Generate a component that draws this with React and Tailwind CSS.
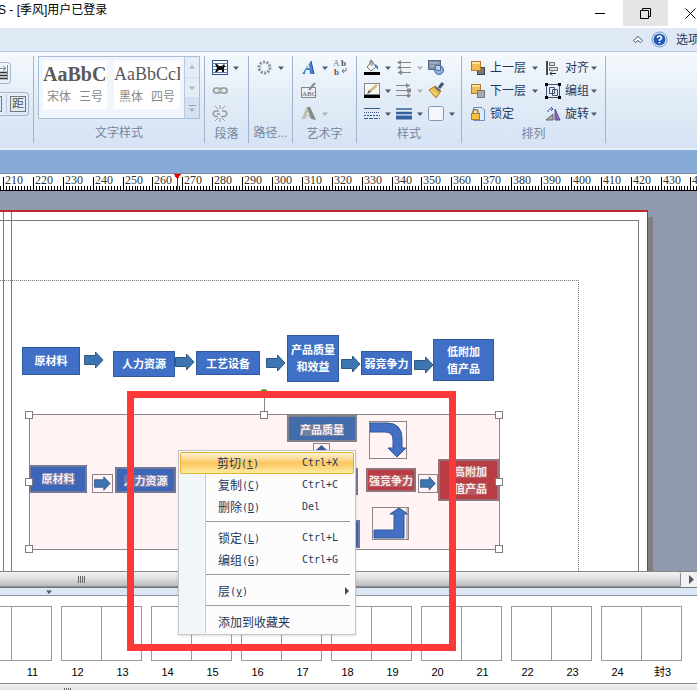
import React from "react";

const cjk = "font-['Liberation_Sans','Noto_Sans_CJK_SC',sans-serif]";

function Caret({ dim }) {
  return (
    <svg width="6" height="4" viewBox="0 0 6 4" className="shrink-0" aria-hidden="true">
      <path d="M0 0.5H6L3 4Z" fill={dim ? "#a9b3c2" : "#4c5a70"} />
    </svg>
  );
}

function Tool({ label, caret, dim, children }) {
  return (
    <button type="button" aria-label={label} className="flex h-[23px] w-8 items-center gap-1">
      <svg width="17" height="17" viewBox="0 0 17 17" className="shrink-0" aria-hidden="true">
        {children}
      </svg>
      {caret && <Caret dim={dim} />}
    </button>
  );
}

function TextTool({ label, caret, gap, children }) {
  return (
    <button type="button" className="flex h-[23px] items-center whitespace-nowrap text-xs text-[#1e395b]">
      <svg width="16" height="16" viewBox="0 0 16 16" className="shrink-0" aria-hidden="true">
        {children}
      </svg>
      <span className={`ml-1 ${gap}`}>{label}</span>
      {caret && <Caret />}
    </button>
  );
}

function Group({ title, width, children }) {
  return (
    <section className={`flex h-[87px] shrink-0 flex-col border-r border-[#9fb3cf] ${width}`}>
      <div className="h-[69px]">{children}</div>
      {title && <h2 className="text-center text-xs leading-[19px] whitespace-nowrap text-[#75869f]">{title}</h2>}
    </section>
  );
}

function Ribbon() {
  return (
    <div className="flex h-[99px] shrink-0 overflow-hidden border-t border-b-2 border-t-[#b4c8e0] border-b-[#e6eef8] bg-linear-to-b from-[#f5f9fd] via-[#e2ecf7] to-[#d6e3f3] pt-1">
      <Group title="" width="w-[34px]">
        <div className="flex flex-col gap-2 pt-1.5">
          <button type="button" aria-label="文字方向" className="flex h-[22px] w-[11px] items-center rounded-r border border-l-0 border-[#a8b6c9]">
            <svg width="9" height="18" viewBox="0 0 9 18" aria-hidden="true">
              <path d="M0 8.5H7M0 11.500H7M0 14.5H7" stroke="#333" strokeWidth="1.5" />
              <path d="M7.5 1V16M0 4.5H6M3 2L6 4.500L3 7" stroke="#888" fill="none" />
            </svg>
          </button>
          <button type="button" aria-label="间距" className="flex h-6 w-[29px] items-center rounded-r border border-l-0 border-[#a8b6c9]">
            <span className="h-4 w-[2px] border-y border-r border-[#777]" />
            <span className="ml-1 h-5 border-l border-[#c0cbda]" />
            <span className="ml-[3px] flex h-4 w-4 items-center justify-center border border-[#777] text-xs leading-3 text-[#555]">距</span>
          </button>
        </div>
      </Group>
      <Group title="文字样式" width="w-[171px]">
        <div className="ml-1 flex h-[63px] w-[162px] border border-[#a8bdd8] bg-[#f1f6fc]">
          <button type="button" className="mt-1 ml-1 h-12 w-16 overflow-hidden bg-white text-[#5a5a5a]">
            <span className="block text-left font-['Liberation_Serif',serif] text-xl leading-6 font-bold">AaBbCc</span>
            <span className="flex justify-center gap-2 text-xs leading-[22px] text-[#888]"><span>宋体</span><span>三号</span></span>
          </button>
          <button type="button" className="mt-1 ml-[7px] h-12 w-[66px] overflow-hidden bg-white text-[#5a5a5a]">
            <span className="block text-left font-['Liberation_Serif',serif] text-lg leading-6">AaBbCcD</span>
            <span className="flex justify-center gap-2 text-xs leading-[22px] text-[#888]"><span>黑体</span><span>四号</span></span>
          </button>
          <div className="ml-auto flex w-[15px] flex-col divide-y divide-[#d3deed] border-l border-[#b9cae0] bg-[#e3ecf7]">
            <button type="button" aria-label="上" className="flex flex-1 items-center justify-center"><span className="rotate-180"><Caret dim /></span></button>
            <button type="button" aria-label="下" className="flex flex-1 items-center justify-center"><Caret dim /></button>
            <button type="button" aria-label="更多" className="flex flex-1 flex-col items-center justify-center gap-0.5 bg-[#d5e1f0]"><span className="w-[7px] border-t border-[#8f9bb0]" /><Caret dim /></button>
          </div>
        </div>
      </Group>
      <Group title="段落" width="w-11">
        <div className="pl-[7px]">
          <Tool label="环绕" caret>
            <rect x="0.5" y="1.5" width="15" height="14" fill="#fff" stroke="#2c4f85" />
            <path d="M0 4.5H16M0 7.500H16M0 10.5H16M0 13.5H16" stroke="#5b7dad" />
            <path d="M3 5L5 5L7 7H10L12 5L13 7L12 9V13H10V11H7L5 13H3L5 9Z" fill="#111" />
          </Tool>
          <Tool label="链接">
            <g fill="none" stroke="#939794" strokeWidth="1.7"><rect x="1.5" y="6" width="7" height="5" rx="2.5" /><rect x="8" y="6" width="7" height="5" rx="2.5" /></g>
            <path d="M5 8.5H11" stroke="#c9c9be" strokeWidth="1.5" />
          </Tool>
          <Tool label="断开链接">
            <g fill="none" stroke="#989a98" strokeWidth="1.5"><path d="M7 6H4A2.5 2.5 0 0 0 4 11.5H6M10 6H12A2.5 2.5 0 0 1 12 11.5H9M5 9H8" /><path d="M3 1L6 4M8 0V4M13 1L10 4M3 16L6 13M8 17V13M13 16L10 13" strokeWidth="1" /></g>
          </Tool>
        </div>
      </Group>
      <Group title="路径..." width="w-11">
        <div className="pl-2">
          <Tool label="路径" caret>
            <circle cx="7.5" cy="8.5" r="5.5" fill="none" stroke="#8b939c" strokeWidth="3" strokeDasharray="2 1.4" />
          </Tool>
        </div>
      </Group>
      <Group title="艺术字" width="w-16">
        <div className="grid grid-cols-[32px_24px] pl-2">
          <Tool label="艺术字样式" caret>
            <path d="M1 15L10 2L13 15H9L8.500 11H5L4 15Z" fill="#4a82d4" /><path d="M6 9H8.500L8 5.500Z" fill="#eef5ff" /><path d="M10 2L13 15" stroke="#244d93" />
          </Tool>
          <Tool label="替换文字">
            <text x="0" y="7" fontSize="9" fontFamily="Liberation Serif" fill="#777">A</text>
            <text x="8" y="7" fontSize="9" fontWeight="bold" fontFamily="Liberation Serif" fill="#555">b</text>
            <text x="1" y="16" fontSize="9" fontWeight="bold" fontFamily="Liberation Serif" fill="#555">b</text>
            <path d="M13 9V12H9M11 10L9 12L11 14" fill="none" stroke="#777" />
          </Tool>
          <Tool label="编辑文字">
            <rect x="0.500" y="5.500" width="14" height="10" fill="#edf0f2" stroke="#888" />
            <text x="1" y="14" fontSize="7" fontFamily="Liberation Serif" fill="#555">ABC</text>
            <path d="M14 1L8 8" stroke="#888" strokeWidth="2" />
          </Tool>
          <span />
          <Tool label="文字效果" caret dim>
            <path d="M1 14L6 2H9L15 15L10 14L9 11H5L4 14Z" fill="#858a84" /><path d="M1 14L6 2L10 13H8L7 11H5L4 14Z" fill="#bfc1b5" />
            <path d="M5.500 10H8L7 7Z" fill="#edf1f4" />
          </Tool>
        </div>
      </Group>
      <Group title="样式" width="w-[105px]">
        <div className="grid grid-cols-[32px_32px_32px] pl-[7px]">
          <Tool label="填充颜色" caret>
            <path d="M3 8L8 2L12 8L7 12Z" fill="#f5f5f5" stroke="#777" /><path d="M6 6V2Q7 0 8 2V7" fill="none" stroke="#777" /><path d="M10 5Q15 6 14 11L12 8Z" fill="#3e70bd" /><rect y="13" width="16" height="3" fill="#000" />
          </Tool>
          <Tool label="左箭头样式" caret dim>
            <path d="M2 3.500H15M2 8.500H15M2 13.500H15" stroke="#888" /><path d="M5 1L1 3.500L5 6ZM5 6L1 8.500L5 11ZM5 11L2 13.500L5 16L7 13.500Z" fill="#888" />
          </Tool>
          <Tool label="阴影">
            <circle cx="11" cy="11" r="4.500" fill="#94b3dc" stroke="#46699e" /><rect x="0.500" y="1.500" width="12" height="9" fill="#7d8ea8" stroke="#59687f" /><path d="M2 4H11M2 7H8" stroke="#b8c4d5" /><path d="M7 6.500H12.500V11.500H9Q7 10 7 6.500Z" fill="#bcd3ee" stroke="#46699e" />
          </Tool>
          <Tool label="线条颜色" caret>
            <rect x="0.500" y="1.500" width="15" height="11" fill="#f8f8f4" stroke="#888" /><path d="M13 3L6 9" stroke="#d6b878" strokeWidth="2.500" /><path d="M5 8L3 12L7 10Z" fill="#555" /><rect y="13" width="16" height="3" fill="#000" />
          </Tool>
          <Tool label="右箭头样式" caret dim>
            <path d="M0 3.500H14M0 8.500H14M0 13.500H14" stroke="#888" /><path d="M10 1L14 3.500L10 6ZM11 6.500H15V10.500H11ZM10 13.500L12.500 11L15 13.500L12.500 16Z" fill="#888" />
          </Tool>
          <Tool label="格式刷">
            <path d="M15 1L11 6" stroke="#445375" strokeWidth="3" /><path d="M7 4L13 9L8 16L1 8Z" fill="#e9bd4e" stroke="#aa7b26" /><path d="M7 5L12 9" stroke="#5b6a8c" strokeWidth="2" /><path d="M3 9L9 13" stroke="#fff0aa" />
          </Tool>
          <Tool label="虚线" caret>
            <path d="M0 3.500H16" stroke="#36588e" /><path d="M0 7.500H16" stroke="#36588e" strokeDasharray="1 1" /><path d="M0 10.500H16" stroke="#36588e" strokeDasharray="2 1" /><path d="M0 13.500H16" stroke="#36588e" strokeDasharray="4 1" />
          </Tool>
          <Tool label="线宽" caret>
            <path d="M0 4H16" stroke="#36609e" strokeWidth="1.500" /><path d="M0 8H16" stroke="#36609e" strokeWidth="2.500" /><path d="M0 12.500H16" stroke="#36609e" strokeWidth="4" />
          </Tool>
          <Tool label="形状" caret>
            <rect x="0.500" y="1.500" width="15" height="14" rx="2" fill="#f4f8fd" stroke="#8794a9" />
          </Tool>
        </div>
      </Group>
      <Group title="排列" width="w-36">
        <div className="grid grid-cols-[75px_60px] pl-2">
          <TextTool label="上一层" caret gap="mr-1.5">
            <rect x="7.500" y="7.500" width="7" height="7" fill="#777" stroke="#444" /><rect x="1.500" y="1.500" width="9" height="9" fill="#f0bd55" stroke="#b77a24" /><path d="M2 3H10" stroke="#ffe19b" strokeWidth="2" />
          </TextTool>
          <TextTool label="对齐" caret gap="mr-0.5">
            <path d="M2 1V15" stroke="#111" strokeWidth="1.500" /><rect x="4.500" y="2.500" width="5" height="3" fill="#ddd" stroke="#777" /><rect x="4.500" y="7.500" width="8" height="3" fill="#ddd" stroke="#777" /><path d="M5 13.500H11M7 11.500L5 13.500L7 15.500" fill="none" stroke="#222" />
          </TextTool>
          <TextTool label="下一层" caret gap="mr-1.5">
            <rect x="1.500" y="1.500" width="9" height="9" fill="#f0bd55" stroke="#b77a24" /><path d="M2 3H10" stroke="#ffe19b" strokeWidth="2" /><rect x="7.500" y="7.500" width="7" height="7" fill="#aaa" stroke="#777" />
          </TextTool>
          <TextTool label="编组" caret gap="mr-0.5">
            <path d="M1.500 1.500H14.500V14.500H1.500ZM4.500 4.500H9.500V10.500H4.500ZM7.500 6.500H12.500V12.500H7.500Z" fill="none" stroke="#405572" /><path d="M0 0H3V3H0ZM13 0H16V3H13ZM0 13H3V16H0ZM13 13H16V16H13Z" fill="#000" />
          </TextTool>
          <TextTool label="锁定" gap="">
            <path d="M3.500 1.500H12L14.500 4V14.500H3.500Z" fill="#deebfa" stroke="#6790c2" /><path d="M3 8V6A2.500 2.500 0 0 1 8 6V8" fill="none" stroke="#a77a25" strokeWidth="1.500" /><rect x="1.500" y="7.500" width="8" height="6" fill="#f3c344" stroke="#b77a24" />
          </TextTool>
          <TextTool label="旋转" caret gap="mr-0.5">
            <path d="M1 14H8L8 8Z" fill="#aaa" stroke="#666" /><path d="M10 3L15 14H10Z" fill="#8a69b4" stroke="#66508c" /><path d="M3 6Q3 2 8 3M6 1L8 3L6 5" fill="none" stroke="#355f9f" />
          </TextTool>
        </div>
      </Group>
    </div>
  );
}

function Ruler() {
  const ticks = Array.from({ length: 240 }, (_, i) => i);
  return (
    <div className="relative h-[18px] shrink-0 overflow-hidden border-t border-b border-t-[#7f8795] border-b-black bg-white">
      <svg width="100%" height="16" className="block" aria-hidden="true" shapeRendering="crispEdges">
        {ticks.map((i) => (
          <rect key={i} x={Math.round((i * 2989) / 1000)} y={i % 10 === 1 ? 3 : 12} width="1" height="13" fill="#000" />
        ))}
        <path d="M174 0H181L178 5V16H177V5Z" fill="#f00000" />
      </svg>
      {ticks.slice(0, 24).map((i) => (
        <span
          key={i}
          className="absolute top-0 font-['Liberation_Serif',serif] text-xs leading-3 text-[#333]"
          style={{ left: Math.round(((i * 10 + 1) * 2989) / 1000) + 2 }}
        >
          {210 + i * 10}
        </span>
      ))}
    </div>
  );
}

const BLUE = "border border-[#2f5a9e] bg-[#4070c6] text-white";
const BLUE_SEL = "border-2 border-[#74799a] bg-[#3d66b8] text-[#f8eef5]";
const RED_SEL = "border-2 border-[#94727b] bg-[#b93c42] text-[#fbecec]";

function Node({ place, tone, mark, lines }) {
  return (
    <div className={`absolute flex flex-col items-center justify-center text-[11px] leading-[17px] font-bold whitespace-nowrap ${place} ${tone}`}>
      {lines.map((t) => (
        <span key={t} className="flex h-[17px] items-center">
          {mark ? <span className={`leading-3 ${mark}`}>{t}</span> : t}
        </span>
      ))}
    </div>
  );
}

function Arrow({ place, framed }) {
  return (
    <div className={`absolute ${place} ${framed ? "border border-[#8c8488] p-px" : ""}`}>
      <svg width="100%" height="100%" viewBox="0 0 20 18" preserveAspectRatio="none" className="block" aria-hidden="true">
        <path d="M0.500 4.500H11.500V1L19 9L11.500 17V13.500H0.500Z" fill="#3d75b0" stroke="#2d5685" />
      </svg>
    </div>
  );
}

function Handle({ place }) {
  return <span className={`absolute size-2 border border-[#807a7e] bg-white ${place}`} />;
}

function Canvas() {
  return (
    <main className="relative min-h-0 flex-1 overflow-hidden bg-[#9099ad]">
      <div className="absolute top-[26px] bottom-0 left-0 w-[653px] bg-[#7f7f80]" />
      <div className="absolute top-[19px] bottom-0 left-0 w-[648px] border-t-2 border-r border-[#c0272d] bg-white">
        <div className="absolute top-2 bottom-0 left-0 w-[639px] border-t border-r border-[#7d797b]" />
        <div className="absolute top-0 bottom-0 left-[3px] w-[9px] border-x border-[#7d797b]" />
        <div className="absolute top-[68px] bottom-0 left-0 w-[579px] border-t border-r border-dotted border-[#777]" />
      </div>

      <Node place="left-[22px] top-[156px] w-[58px] h-7" tone={BLUE} lines={["原材料"]} />
      <Arrow place="left-[84px] top-[160px] w-5 h-[18px]" />
      <Node place="left-[113px] top-[160px] w-[62px] h-[26px] pt-px" tone={BLUE} lines={["人力资源"]} />
      <Arrow place="left-[175px] top-[162px] w-5 h-[18px]" />
      <Node place="left-[196px] top-[160px] w-16 h-6 pt-0.5" tone={BLUE} lines={["工艺设备"]} />
      <Arrow place="left-[266px] top-[163px] w-5 h-[18px]" />
      <Node place="left-[287px] top-[144px] w-[52px] h-[47px]" tone={BLUE} lines={["产品质量", "和效益"]} />
      <Arrow place="left-[341px] top-[164px] w-5 h-[18px]" />
      <Node place="left-[361px] top-[160px] w-[51px] h-6 pt-0.5" tone={BLUE} lines={["弱竞争力"]} />
      <Arrow place="left-[414px] top-[165px] w-5 h-[18px]" />
      <Node place="left-[433px] top-[148px] w-[61px] h-[42px] pt-0.5" tone={BLUE} lines={["低附加", "值产品"]} />

      <div className="absolute top-[223px] left-[29px] h-[136px] w-[471px] border border-[#8c8488] bg-[#fff4f3]" />
      <div className="absolute top-[200px] left-[264px] h-6 border-l border-[#8c8488]" />
      <span className="absolute top-[198px] left-[260px] size-2 rounded-full bg-[#5ca02c]" />
      <Node place="left-[29px] top-[274px] w-[58px] h-[28px]" tone={BLUE_SEL} mark="bg-[#7078a8]" lines={["原材料"]} />
      <Arrow framed place="left-[92px] top-[283px] w-[21px] h-[19px]" />
      <Node place="left-[115px] top-[276px] w-[61px] h-[26px] pt-0.5" tone={BLUE_SEL} mark="bg-[#7078a8]" lines={["人力资源"]} />
      <Node place="left-[287px] top-[224px] w-[70px] h-[27px] pt-0.5" tone="border-2 border-[#81818c] bg-[#426cab] text-[#f8eef5]" mark="bg-[#737f9e]" lines={["产品质量"]} />
      <div className="absolute top-[252px] left-[313px] size-[17px] border border-[#8c8488] p-px">
        <svg width="13" height="13" viewBox="0 0 13 13" aria-hidden="true"><path d="M6.500 0L13 6H10V13H3V6H0Z" fill="#365f9f" /></svg>
      </div>
      <div className="absolute top-[230px] left-[369px] size-[38px] border border-[#8c8488]">
        <svg width="36" height="36" viewBox="0 0 36 36" aria-hidden="true"><path d="M0 1H17Q32 1 32 17V26H36L27 35L18 26H23V18Q23 10 15 10H0Z" fill="#4470c4" stroke="#305496" /></svg>
      </div>
      <div className="absolute top-[277px] left-[350px] h-[27px] w-2 bg-[#74799a]" />
      <div className="absolute top-[329px] left-[350px] h-7 w-[10px] border-2 border-[#74799a] bg-[#3d66b8]" />
      <Node place="left-[366px] top-[277px] w-[50px] h-6 pt-0.5" tone={RED_SEL} mark="bg-[#b45a60]" lines={["强竞争力"]} />
      <Arrow framed place="left-[418px] top-[283px] w-5 h-[19px]" />
      <Node place="left-[438px] top-[268px] w-[61px] h-[42px] pl-1" tone={RED_SEL} mark="bg-[#b45a60]" lines={["高附加", "值产品"]} />
      <div className="absolute top-[316px] left-[372px] h-[33px] w-[37px] border border-[#8c8488]">
        <svg width="35" height="31" viewBox="0 0 35 31" aria-hidden="true"><path d="M1 22H21V6H17L26 0L35 6H31V30H1Z" fill="#4470c4" stroke="#305496" /><path d="M34 0V31" stroke="#8c8488" /></svg>
      </div>
      <Handle place="left-[25px] top-[220px]" />
      <Handle place="left-[260px] top-[220px]" />
      <Handle place="left-[495px] top-[220px]" />
      <Handle place="left-[25px] top-[287px]" />
      <Handle place="left-[495px] top-[287px]" />
      <Handle place="left-[25px] top-[354px]" />
      <Handle place="left-[495px] top-[354px]" />
    </main>
  );
}

function Grip() {
  return (
    <span className="flex gap-px">
      <i className="h-[7px] w-px bg-[#666]" /><i className="h-[7px] w-px bg-[#666]" /><i className="h-[7px] w-px bg-[#666]" /><i className="h-[7px] w-px bg-[#666]" />
    </span>
  );
}

const spreads = [["", "11"], ["12", "13"], ["14", "15"], ["16", "17"], ["18", "19"], ["20", "21"], ["22", "23"], ["24", "封3"]];

function Pages() {
  return (
    <>
      <div className="flex h-[17px] shrink-0 border-y border-t-[#85858a] border-b-[#77777d] bg-[#f0f1f3]">
        <div className="flex flex-1 items-center rounded-r-xs border-r border-b border-[#8c8c90] bg-linear-to-b from-[#f4f4f5] via-[#dcdddf] to-[#b9babd] pl-[78px]">
          <Grip />
        </div>
        <button type="button" aria-label="向右滚动" className="flex w-4 items-center justify-center">
          <svg width="5" height="9" viewBox="0 0 5 9" className="ml-1" aria-hidden="true"><path d="M0 0L5 4.500L0 9Z" fill="#555861" /></svg>
        </button>
      </div>
      <div className="flex h-2 shrink-0 items-center border-b border-[#8e9299] bg-[#dce7f5] pl-[46px]"><Caret /></div>
      <div className="flex shrink-0 overflow-hidden bg-white pt-[10px]">
        {spreads.map(([a, b], i) => (
          <div key={b} className={`w-[90px] shrink-0 ${i === 0 ? "-ml-[35px]" : ""}`}>
            <div className="ml-[6px] flex h-[55px] w-[81px] divide-x divide-[#999] border border-[#999]">
              <div className="flex-1" />
              <div className="flex-1" />
            </div>
            <div className="flex h-[22px] items-center text-center text-[11px] leading-4 text-black">
              <span className="w-[45px]">{a}</span>
              <span className="w-[45px]">{b}</span>
            </div>
          </div>
        ))}
      </div>
      <div className="flex h-[7px] shrink-0 items-start overflow-hidden border-t border-[#8a8a8e] bg-linear-to-b from-[#f3f3f4] to-[#e2e3e5] pt-1 pl-16"><Grip /></div>
    </>
  );
}

const menu = [
  [{ t: "剪切", k: "t", s: "Ctrl+X", on: true }, { t: "复制", k: "C", s: "Ctrl+C" }, { t: "删除", k: "D", s: "Del" }],
  [{ t: "锁定", k: "L", s: "Ctrl+L" }, { t: "编组", k: "G", s: "Ctrl+G" }],
  [{ t: "层", k: "y", sub: true }],
  [{ t: "添加到收藏夹" }],
];

function ContextMenu() {
  return (
    <div role="menu" className="absolute top-[450px] left-[178px] w-[178px] border border-[#c3c5c9] bg-linear-to-r from-[#f0f6fa] from-[26px] to-[#fcfcfd] to-[26px] p-px text-xs text-[#1e395b] shadow-sm">
      {menu.map((items, g) => (
        <div key={g}>
          {g > 0 && <div className="ml-[25px] h-[9px] border-l border-[#c8cbd0] pt-[3px]"><div className="mr-1 border-t border-[#9a9a9e]" /></div>}
          {items.map((m) => (
            <button
              key={m.t}
              type="button"
              role="menuitem"
              className={`flex h-[22px] w-full items-center text-left whitespace-nowrap ${m.on ? "rounded-xs border border-[#e2b32c] bg-linear-to-b from-[#fdf3d5] via-[#fbc65b] to-[#fdeba0]" : "border border-transparent"}`}
            >
              <span className={`ml-6 flex h-[22px] w-[97px] items-center pt-0.5 pl-3 ${m.on ? "" : "border-l border-[#c8cbd0]"}`}>
                {m.t}
                {m.k && <span className="font-['DejaVu_Sans_Mono',monospace] text-[10px]">(<u>{m.k}</u>)</span>}
              </span>
              <span className="font-['DejaVu_Sans_Mono',monospace] text-[10px]">{m.s}</span>
              {m.sub && <svg width="4" height="8" viewBox="0 0 4 8" className="mr-1 ml-auto" aria-hidden="true"><path d="M0 0L4 4L0 8Z" fill="#3f4a5c" /></svg>}
            </button>
          ))}
        </div>
      ))}
    </div>
  );
}

export default function App() {
  return (
    <div className={`relative flex h-screen flex-col overflow-hidden bg-white ${cjk}`}>
      <header className="flex h-7 shrink-0 items-start overflow-hidden">
        <h1 className="-ml-0.5 text-xs leading-5 text-black">S - [季风]用户已登录</h1>
        <div className="ml-auto flex w-[120px] overflow-hidden">
          <button type="button" aria-label="最小化" className="flex h-[26px] w-[46px] shrink-0 items-center justify-center"><span className="w-[10px] border-t border-black" /></button>
          <button type="button" aria-label="还原" className="flex h-[26px] w-[45px] shrink-0 items-center justify-center bg-[#e5e5e5]">
            <svg width="11" height="11" viewBox="0 0 11 11" fill="none" stroke="#000" aria-hidden="true"><path d="M0.500 2.500H8.500V10.500H0.500ZM2.500 2.500V0.500H10.500V8.500H8.500" /></svg>
          </button>
          <button type="button" aria-label="关闭" className="flex h-[26px] w-[45px] shrink-0 items-center justify-center">
            <svg width="11" height="11" viewBox="0 0 11 11" stroke="#000" aria-hidden="true"><path d="M0.500 0.500L10.500 10.500M10.500 0.500L0.500 10.500" /></svg>
          </button>
        </div>
      </header>
      <nav className="flex h-[23px] shrink-0 bg-[#dfe8f5]">
        <div className="ml-auto flex w-[64px] items-center overflow-hidden text-[#1e395b]">
          <button type="button" aria-label="折叠功能区" className="shrink-0">
            <svg width="10" height="7" viewBox="0 0 10 7" className="block" aria-hidden="true"><path d="M5 0.500L9.500 4.500L7.500 6.500L5 4.500L2.500 6.500L0.500 4.500Z" fill="#fff" stroke="#46546b" /></svg>
          </button>
          <button type="button" aria-label="帮助" className="ml-2 shrink-0">
            <svg width="17" height="17" viewBox="0 0 17 17" className="block" aria-hidden="true">
              <circle cx="8.500" cy="8.500" r="7.500" fill="#e8f1fc" stroke="#7998c6" /><circle cx="8.500" cy="8.500" r="6" fill="#2459b4" />
              <path d="M6.500 7Q6.500 5 8.500 5T10.500 7Q10.500 8 8.500 9V10M8.500 11V12.500" fill="none" stroke="#fff" strokeWidth="1.600" />
            </svg>
          </button>
          <button type="button" className="ml-2 shrink-0 text-xs">选项</button>
        </div>
      </nav>
      <Ribbon />
      <div className="h-[23px] shrink-0 bg-[#88aad6]" />
      <Ruler />
      <Canvas />
      <Pages />
      <ContextMenu />
      <div className="pointer-events-none absolute top-[391px] left-[127px] h-[260px] w-[329px] border-[7px] border-[#fd3839]" />
    </div>
  );
}
